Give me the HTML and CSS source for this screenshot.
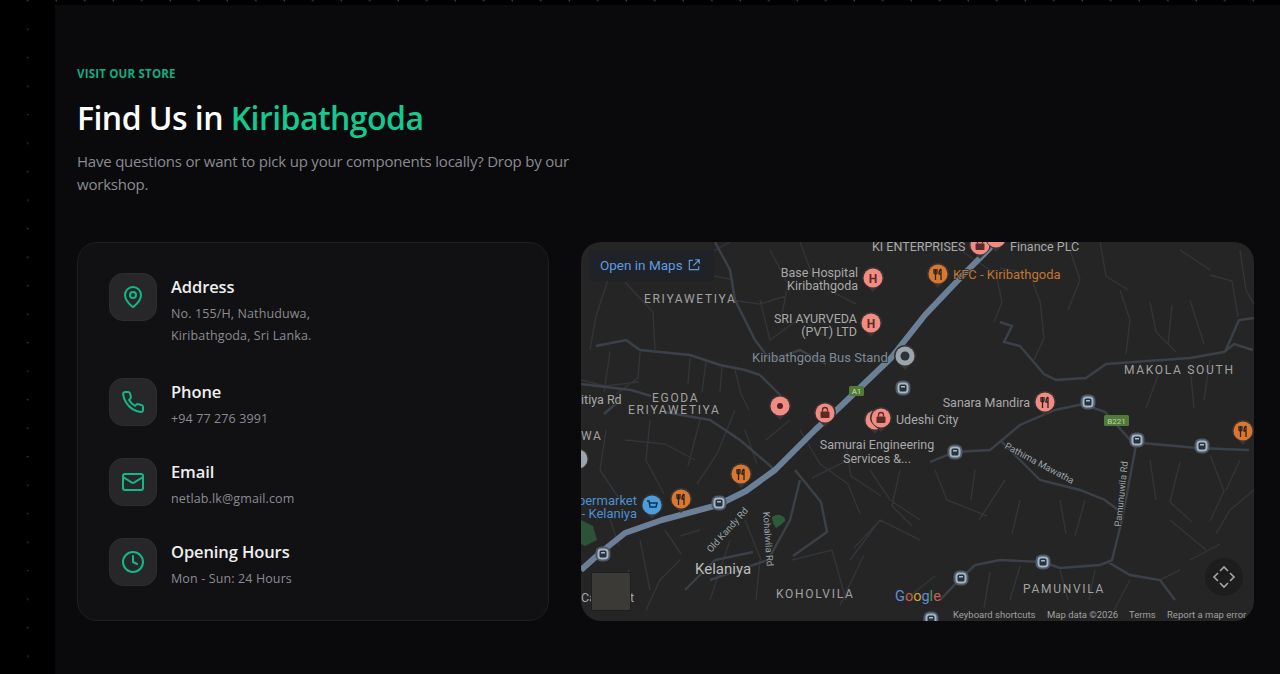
FILE: index.html
```html
<!DOCTYPE html>
<html lang="en">
<head>
  <meta charset="UTF-8" />
  <meta name="viewport" content="width=device-width, initial-scale=1" />
  <title>Find Us in Kiribathgoda</title>
  <link rel="stylesheet" href="styles.css">
</head>
<body>
  <section class="store">
    <p class="eyebrow">Visit Our Store</p>
    <h2 class="title">Find Us in <span class="accent">Kiribathgoda</span></h2>
    <p class="lead">Have questions or want to pick up your components locally? Drop by our workshop.</p>

    <div class="store-grid">
      <div class="info-card">
        <div class="info-item info-item-long">
          <div class="info-icon">
            <svg viewBox="0 0 24 24"><path d="M20 10c0 5-5.5 10.2-7.4 11.8a1 1 0 0 1-1.2 0C9.5 20.2 4 15 4 10a8 8 0 0 1 16 0"/><circle cx="12" cy="10" r="3"/></svg>
          </div>
          <div class="info-text">
            <h3>Address</h3>
            <p>No. 155/H, Nathuduwa,<br>Kiribathgoda, Sri Lanka.</p>
          </div>
        </div>
        <div class="info-item">
          <div class="info-icon">
            <svg viewBox="0 0 24 24"><path d="M22 16.9v3a2 2 0 0 1-2.2 2 19.8 19.8 0 0 1-8.6-3.1 19.5 19.5 0 0 1-6-6 19.8 19.8 0 0 1-3.1-8.7A2 2 0 0 1 4.1 2h3a2 2 0 0 1 2 1.7c.1 1 .4 1.9.7 2.8a2 2 0 0 1-.5 2.1L8.1 9.9a16 16 0 0 0 6 6l1.3-1.3a2 2 0 0 1 2.1-.4c.9.3 1.8.6 2.8.7a2 2 0 0 1 1.7 2z"/></svg>
          </div>
          <div class="info-text">
            <h3>Phone</h3>
            <p>+94 77 276 3991</p>
          </div>
        </div>
        <div class="info-item">
          <div class="info-icon">
            <svg viewBox="0 0 24 24"><rect x="2" y="4" width="20" height="16" rx="2"/><path d="M22 7l-8.97 5.7a1.94 1.94 0 0 1-2.06 0L2 7"/></svg>
          </div>
          <div class="info-text">
            <h3>Email</h3>
            <p>netlab.lk@gmail.com</p>
          </div>
        </div>
        <div class="info-item">
          <div class="info-icon">
            <svg viewBox="0 0 24 24"><circle cx="12" cy="12" r="10"/><path d="M12 6v6l4 2"/></svg>
          </div>
          <div class="info-text">
            <h3>Opening Hours</h3>
            <p>Mon - Sun: 24 Hours</p>
          </div>
        </div>
      </div>

      <div class="map-card">
        <svg class="map" viewBox="581 242 673 379">
          <defs>
            <g id="pin">
              <path d="M-11 0a11 11 0 0 1 22 0c0 6-7 9-11 14C-4 9-11 6-11 0z" fill="#3a3432"/>
              <circle r="9.500" fill="currentColor"/>
            </g>
            <g id="bus">
              <rect x="-7.500" y="-7.500" width="15" height="15" rx="6" fill="#4f5a66"/>
              <rect x="-5.500" y="-5.500" width="11" height="11" rx="4" fill="#a3b5c7"/>
              <rect x="-3.500" y="-3.500" width="7" height="7" rx="1.500" fill="#2b3138"/>
              <rect x="-2" y="-2" width="4" height="1.500" fill="#a9bccd"/>
            </g>
            <g id="fork">
              <path d="M-4-5v3.500q0 1.500 1.500 1.500t1.500-1.500V-5M-2.500-5v11M3-5q-2 1-2 5h2M3-5v11" fill="none" stroke="#2b2320" stroke-width="1.300"/>
            </g>
            <g id="bag">
              <rect x="-4.500" y="-1.500" width="9" height="6.500" rx="1" fill="#5a2b28"/>
              <path d="M-2.500-1.500v-1.500a2.500 2.500 0 0 1 5 0v1.500" fill="none" stroke="#5a2b28" stroke-width="1.300"/>
            </g>
          </defs>

          <rect x="581" y="242" width="673" height="379" fill="#252525"/>

          <g class="roads">
            <path class="roads-minor" d="M600 250l8 30-12 36-6 34M625 282l28 30 2 38M640 250l-8 30M668 262l40-8 22-12M700 280l14-4 20 4M730 300l30 4 26-8M770 250l18 34-6 30M800 242l12 32 24 20 20 10M760 300l10 40 30-22 30 22M690 358l-2 26M706 362l-4 30M722 366l-2 26M735 370l6 24 8 16M640 352l-2 26-22 16M610 352l-6 40M581 380l24 6 34-4M650 420l-4 40 18 34M606 430l-6 40 20 30M625 440l40 4 30 16M700 420l-12 46M735 410l-18 44 -20 30M745 430l12 34M790 420l-24 20M800 430l20 34 28 20 12 30M845 440l6 36 30 20M812 478l36-18M870 470l20 30 30 20M900 470l-8 36 20 20M935 470l12 30 40 16M975 470l-4 30M1005 480l-26 40M1020 500l-8 34M1060 500l6 34M1085 500l-10 36 M960 250l36 24 6 28-8 20M1000 268l30 6 10 28M1040 300l4 38 -10 22M1070 250l10 30 -12 30M1100 242l6 34 22 14M1120 290l10 30 -4 34M1150 302l6 30 20 20M1172 305l-4 40M1190 300l14 44M1210 275l22 6 6 36M1240 250l6 40 8 14M1180 250l30 20M1160 370l-14 38M1190 366l4 42M1210 360l-6 40M1180 462l-10 40 22 20M1210 455l14 36 -14 30M1240 460l-14 30M1150 460l6 40M1254 490l-24 20 -14 24M1170 520l36 30M1190 560l30-16M1130 580l-16 30M1160 580l20 -10M1095 570l-6 30M1060 570l8 30M1020 566l-10 34M990 572l-6 36M905 600l30-24M850 560l30-40 40 20M880 520l-26 28M840 605l24-50M792 560l40-10 14 50M760 560l-4 40M730 540l-20 60M680 560l-20 20-14 30M640 540l10 50M665 530l16 24M700 530l-20 6M745 520l16 40M600 590l30-20M581 500l28 16 10 30"/>
            <path class="roads-mid" d="M1000 322l12 4-8 16 16 4 24 28 12 6 30-2 20-14 84-6 34-6 10-8 19 6M1225 352l14-32 15-2M930 462l25-10 35-2 30-25 35-15 28-6 22 8 27 30 65 6 52 2M1000 440l40 40 40 10 25 10 13 10M1137 440l-15 80-10 40-12 5-40 3-17-6-43-2-25 5-14 13-21 22M1108 562l22 13 30 5 15 20M596 346l30-6 14 10 50 5 30 10 25 5 15 5M715 242l15 28 5 30 20 40 15 20M770 360l30-10 26 14M760 375l25 25M775 470l-35-30-30-20-46-8M620 400l-16 14M581 384l50 6 20 6M800 480l-10 40-22 40-58 20M685 590l30-30 38-8M795 470l26 32 6 30-34 24"/>
          </g>
          <path class="road-main" d="M581 570l19-17 25-20 37-13 56-15 28-14 29-21 40-40 27-25 49-47 34-43 38-40 27-27 14-26"/>

          <g class="map-label">
            <text x="872" y="250.500">KI ENTERPRISES</text>
            <text x="1010" y="251">Finance PLC</text>
            <text x="858" y="277" text-anchor="end">Base Hospital</text>
            <text x="858" y="290" text-anchor="end">Kiribathgoda</text>
            <text x="857" y="323" text-anchor="end">SRI AYURVEDA</text>
            <text x="857" y="336" text-anchor="end">(PVT) LTD</text>
            <text class="map-dim" x="752" y="362">Kiribathgoda Bus Stand</text>
            <text x="581" y="404">itiya Rd</text>
            <text x="896" y="424">Udeshi City</text>
            <text x="1030" y="407" text-anchor="end">Sanara Mandira</text>
            <text x="877" y="449" text-anchor="middle">Samurai Engineering</text>
            <text x="877" y="463" text-anchor="middle">Services &amp;...</text>
            <text class="map-orange" x="953" y="279">KFC - Kiribathgoda</text>
            <text class="map-blue" x="637" y="505" text-anchor="end">permarket</text>
            <text class="map-blue" x="637" y="518" text-anchor="end">- Kelaniya</text>
            <text x="581" y="602">Ca</text>
            <text x="630" y="602">t</text>
            <text class="map-town" x="695" y="574">Kelaniya</text>
          </g>
          <g class="map-area">
            <text x="644" y="303">ERIYAWETIYA</text>
            <text x="652" y="402">EGODA</text>
            <text x="628" y="414">ERIYAWETIYA</text>
            <text x="581" y="440">WA</text>
            <text x="1124" y="374">MAKOLA SOUTH</text>
            <text x="776" y="598">KOHOLVILA</text>
            <text x="1023" y="593">PAMUNVILA</text>
          </g>
          <g class="map-road-label">
            <text transform="translate(711 553) rotate(-48)">Old Kandy Rd</text>
            <text transform="translate(763 512) rotate(86)">Kohalwila Rd</text>
            <text transform="translate(1004 448) rotate(28)">Pathima Mawatha</text>
            <text transform="translate(1121 527) rotate(-84)">Pamunuwila Rd</text>
          </g>

          <path d="M772 517q6-4 10-1 4 2 3 5-5 5-9 7-4-5-4-11z" fill="#2f5a3a"/>
          <path d="M581 520l12 6 4 14-12 6-4-2z" fill="#2c5238"/>

          <g class="shield">
            <rect x="849" y="386" width="15" height="10" rx="1.500" fill="#4f7a3a"/>
            <text x="856.500" y="394" text-anchor="middle" fill="#c8e0a8">A1</text>
            <rect x="1104" y="415" width="25" height="11" rx="1.500" fill="#4f7a3a"/>
            <text x="1116.500" y="424" text-anchor="middle" fill="#b8d89a">B221</text>
          </g>

          <use href="#bus" x="903" y="388"/>
          <use href="#bus" x="719" y="503"/>
          <use href="#bus" x="603" y="554"/>
          <use href="#bus" x="955" y="452"/>
          <use href="#bus" x="1088" y="402"/>
          <use href="#bus" x="1137" y="440"/>
          <use href="#bus" x="1202" y="446"/>
          <use href="#bus" x="1043" y="562"/>
          <use href="#bus" x="961" y="578"/>
          <use href="#bus" x="931" y="619"/>

          <use href="#pin" x="873" y="278" class="pin-red"/>
          <text class="pin-h" x="873" y="282.500">H</text>
          <use href="#pin" x="871" y="323" class="pin-red"/>
          <text class="pin-h" x="871" y="327.500">H</text>
          <use href="#pin" x="905" y="356" class="pin-grey"/>
          <circle cx="905" cy="356" r="4.500" fill="#2f3337"/>
          <use href="#pin" x="780" y="406" class="pin-red"/>
          <circle cx="780" cy="406" r="3" fill="#4a2523"/>
          <use href="#pin" x="825" y="413" class="pin-red"/><use href="#bag" x="825" y="413"/>
          <use href="#pin" x="875" y="420" class="pin-red"/>
          <use href="#pin" x="881" y="418" class="pin-red"/><use href="#bag" x="881" y="418"/>
          <use href="#pin" x="980" y="245" class="pin-red"/><use href="#bag" x="980" y="245"/>
          <use href="#pin" x="996" y="238" class="pin-red"/>
          <use href="#pin" x="938" y="274" class="pin-orange"/><use href="#fork" x="938" y="274"/>
          <use href="#pin" x="1045" y="402" class="pin-red"/><use href="#fork" x="1045" y="402"/>
          <use href="#pin" x="1243" y="431" class="pin-orange"/><use href="#fork" x="1243" y="431"/>
          <use href="#pin" x="741" y="474" class="pin-orange"/><use href="#fork" x="741" y="474"/>
          <use href="#pin" x="681" y="499" class="pin-orange"/><use href="#fork" x="681" y="499"/>
          <use href="#pin" x="652" y="505" class="pin-blue"/>
          <path d="M647 501h2l1 6h6l1-4h-7" fill="none" stroke="#17324a" stroke-width="1.500"/>
          <use href="#pin" x="578" y="459" class="pin-grey"/>

          <g class="map-google">
            <text x="895" y="601"><tspan fill="#5f8fd8">G</tspan><tspan fill="#c9604f">o</tspan><tspan fill="#d0a63c">o</tspan><tspan fill="#5f8fd8">g</tspan><tspan fill="#4f9a5c">l</tspan><tspan fill="#c9604f">e</tspan></text>
          </g>
          <g class="map-attrib">
            <text x="953" y="618">Keyboard shortcuts</text>
            <text x="1047" y="618">Map data ©2026</text>
            <text x="1129" y="618">Terms</text>
            <text x="1167" y="618">Report a map error</text>
          </g>

          <circle cx="1224" cy="577" r="19" fill="#1d1d1d"/>
          <path class="map-move" d="M1220 571l4-4 4 4M1220 583l4 4 4-4M1218 573l-4 4 4 4M1230 573l4 4-4 4"/>
        </svg>

        <a class="map-open" href="#">Open in Maps
          <svg viewBox="0 0 24 24"><path d="M10 4H4v16h16v-6M14 3h7v7M21 3l-10 10"/></svg>
        </a>
        <div class="map-thumb"></div>
      </div>
    </div>
  </section>
</body>
</html>
```

FILE: styles.css
```css
* {
  box-sizing: border-box;
}
body {
  margin: 0;
  height: 674px;
  overflow: hidden;
  padding: 5px 0 0 55px;
  background-color: #000;
  background-image: radial-gradient(circle at 28px 0.5px, #3a3a3a 0.8px, transparent 1.2px);
  background-size: 28.5px 28.5px;
  font-family: "Open Sans", "Noto Sans", sans-serif;
}
.store {
  height: 669px;
  padding: 61px 26px 0 22px;
  background: #0a0a0c;
}
.eyebrow {
  margin: 0;
  font-size: 11.5px;
  line-height: 16px;
  font-weight: 700;
  letter-spacing: 0.2px;
  text-transform: uppercase;
  color: #12ad82;
}
.title {
  margin: 14px 0 0;
  font-size: 32px;
  line-height: 44px;
  font-weight: 600;
  letter-spacing: -0.55px;
  color: #fff;
}
.accent {
  color: #14c98f;
}
.lead {
  max-width: 500px;
  margin: 10px 0 0;
  font-size: 15px;
  line-height: 23px;
  letter-spacing: -0.21px;
  color: #8b8b92;
}
.store-grid {
  display: grid;
  grid-template-columns: 472px 673px;
  gap: 32px;
  margin-top: 46px;
}
.info-card {
  display: flex;
  flex-direction: column;
  gap: 28px;
  height: 379px;
  padding: 30px 31px;
  background: #111114;
  border: 1px solid #1f1f22;
  border-radius: 20px;
}
.info-item {
  display: flex;
  gap: 14px;
}
.info-item-long {
  margin-bottom: 3px;
}
.info-icon {
  display: flex;
  align-items: center;
  justify-content: center;
  flex: none;
  width: 48px;
  height: 48px;
  background: #27272a;
  border: 1px solid #2e2e31;
  border-radius: 14px;
}
.info-icon svg {
  width: 24px;
  height: 24px;
  fill: none;
  stroke: #14b886;
  stroke-width: 2;
  stroke-linecap: round;
  stroke-linejoin: round;
}
.info-text {
  padding-top: 2px;
}
.info-text h3 {
  margin: 0;
  font-size: 16.5px;
  line-height: 24px;
  font-weight: 600;
  letter-spacing: -0.1px;
  color: #eeeeee;
}
.info-text p {
  margin: 4px 0 0;
  font-size: 12.5px;
  line-height: 22px;
  letter-spacing: 0.12px;
  color: #8b8b92;
}
.map-card {
  position: relative;
  height: 379px;
  overflow: hidden;
  border-radius: 20px;
}
.map {
  display: block;
  width: 673px;
  height: 379px;
  font-family: Roboto, "Liberation Sans", sans-serif;
}
.roads {
  filter: blur(0.7px);
}
.roads-minor {
  fill: none;
  stroke: #323539;
  stroke-width: 1.4;
}
.roads-mid {
  fill: none;
  stroke: #3b4148;
  stroke-width: 2.4;
}
.road-main {
  fill: none;
  stroke: #6b7f96;
  stroke-width: 6;
  stroke-linejoin: round;
}
.map-label text {
  font-size: 12.5px;
  fill: #a9a9a9;
  paint-order: stroke;
  stroke: #252525;
  stroke-width: 1.5px;
}
.map-label .map-dim {
  font-size: 13px;
  fill: #7f8a94;
}
.map-label .map-orange {
  font-size: 13px;
  fill: #c27532;
}
.map-label .map-blue {
  font-size: 13px;
  fill: #4d8fd0;
}
.map-label .map-town {
  font-size: 15px;
  fill: #bdbdbd;
}
.map-area text {
  font-size: 12px;
  letter-spacing: 1.7px;
  fill: #a2a2a2;
}
.map-road-label text {
  font-size: 9.5px;
  fill: #9aa3ab;
  paint-order: stroke;
  stroke: #252525;
  stroke-width: 2px;
}
.shield text {
  font-size: 8px;
}
.pin-red {
  color: #f28b82;
}
.pin-orange {
  color: #d9772f;
}
.pin-blue {
  color: #4a9ee0;
}
.pin-grey {
  color: #9aa5ae;
}
.pin-h {
  font-size: 12px;
  font-weight: 700;
  text-anchor: middle;
  fill: #5a2b28;
}
.map-google text {
  font-size: 14.5px;
}
.map-attrib text {
  font-size: 9.5px;
  fill: #a0a0a0;
}
.map-move {
  fill: none;
  stroke: #a8a8a8;
  stroke-width: 1.6;
}
.map-open {
  position: absolute;
  top: 8px;
  left: 8px;
  display: flex;
  align-items: center;
  gap: 4px;
  width: 125px;
  height: 31px;
  padding: 0 0 2px 11px;
  background: #1f2226;
  font-family: Roboto, "Liberation Sans", sans-serif;
  font-size: 13.5px;
  color: #5f9be0;
  text-decoration: none;
}
.map-open svg {
  width: 14px;
  height: 14px;
  fill: none;
  stroke: #5f9be0;
  stroke-width: 2;
}
.map-thumb {
  position: absolute;
  left: 10px;
  bottom: 10px;
  width: 40px;
  height: 39px;
  background: #3b3a36;
  border: 1px solid #1e1e1e;
  border-radius: 2px;
}
```
